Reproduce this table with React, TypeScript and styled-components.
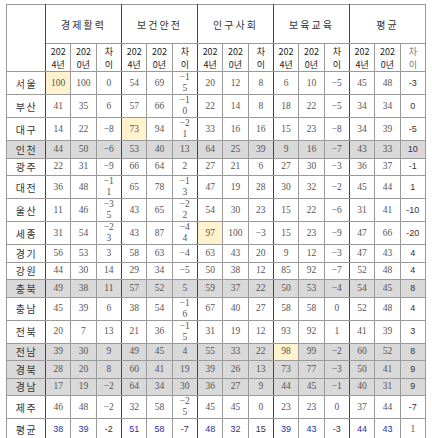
import React from "react";
import styled, { createGlobalStyle, css } from "styled-components";

const Global = createGlobalStyle`
  html, body { margin: 0; padding: 0; background: #fff; }
  body { font-family: "Noto Sans CJK KR", "Noto Sans", sans-serif; }
`;

type Bg = "gray" | "hl" | undefined;
type Kind = "num" | "sans" | "blue" | "avgdiff";

const Page = styled.div`
  padding: 4px 0 0 6px;
`;

const Table = styled.table`
  border-collapse: collapse;
  table-layout: fixed;
  width: 420px;
  border: 1px solid #555;
`;

const Row = styled.tr<{ $h: number; $gray?: boolean }>`
  height: ${(p) => p.$h}px;
  background: ${(p) => (p.$gray ? "#d9d9d9" : "#fff")};
`;

const HeadCell = styled.th<{ $divider?: boolean }>`
  border: 1px solid #9a9a9a;
  ${(p) => p.$divider && css`border-right: 1px solid #444;`}
  font-weight: normal;
  font-size: 10px;
  letter-spacing: 2px;
  color: #333;
  padding: 0;
  text-align: center;
  vertical-align: middle;
`;

const SubHeadCell = styled.th<{ $divider?: boolean; $faint?: boolean }>`
  border: 1px solid #9a9a9a;
  ${(p) => p.$divider && css`border-right: 1px solid #444;`}
  font-weight: normal;
  font-family: "Noto Sans CJK KR", "Noto Sans", sans-serif;
  font-size: 9px;
  line-height: 13px;
  color: ${(p) => (p.$faint ? "#777" : "#222")};
  padding: 0;
  text-align: center;
  vertical-align: middle;
`;

const SubLine = styled.span`
  display: block;
`;

const LabelCell = styled.td`
  border: 1px solid #9a9a9a;
  border-right: 1px solid #444;
  font-size: 10px;
  letter-spacing: 1.5px;
  color: #333;
  text-align: center;
  vertical-align: middle;
  padding: 0 0 0 1px;
`;

const Cell = styled.td<{ $bg?: Bg; $kind: Kind; $divider?: boolean }>`
  border: 1px solid #9a9a9a;
  ${(p) => p.$divider && css`border-right: 1px solid #444;`}
  ${(p) => p.$bg === "hl" && css`background: #fff2cc;`}
  text-align: center;
  vertical-align: middle;
  padding: 0;
  line-height: 11px;
  ${(p) =>
    p.$kind === "num" &&
    css`
      font-family: "Liberation Serif", serif;
      font-size: 9.5px;
      color: #555;
    `}
  ${(p) =>
    p.$kind === "sans" &&
    css`
      font-family: "Liberation Sans", sans-serif;
      font-size: 9px;
      color: #444;
    `}
  ${(p) =>
    p.$kind === "avgdiff" &&
    css`
      font-family: "Liberation Sans", sans-serif;
      font-size: 9px;
      color: #333;
    `}
  ${(p) =>
    p.$kind === "blue" &&
    css`
      font-family: "Liberation Sans", sans-serif;
      font-size: 9px;
      color: #2e2e9e;
    `}
`;

const groups = ["경제활력", "보건안전", "인구사회", "보육교육", "평균"];

type RowData = {
  name: string;
  v: (number | string)[];
  gray?: boolean;
  hl?: number;
};

const rows: RowData[] = [
  { name: "서울", v: [100, 100, 0, 54, 69, -15, 20, 12, 8, 6, 10, -5, 45, 48, -3], hl: 0 },
  { name: "부산", v: [41, 35, 6, 57, 66, -10, 22, 14, 8, 18, 22, -5, 34, 34, 0] },
  { name: "대구", v: [14, 22, -8, 73, 94, -21, 33, 16, 16, 15, 23, -8, 34, 39, -5], hl: 3 },
  { name: "인천", v: [44, 50, -6, 53, 40, 13, 64, 25, 39, 9, 16, -7, 43, 33, 10], gray: true },
  { name: "광주", v: [22, 31, -9, 66, 64, 2, 27, 21, 6, 27, 30, -3, 36, 37, -1] },
  { name: "대전", v: [36, 48, -11, 65, 78, -13, 47, 19, 28, 30, 32, -2, 45, 44, 1] },
  { name: "울산", v: [11, 46, -35, 43, 65, -22, 54, 30, 23, 15, 22, -6, 31, 41, -10] },
  { name: "세종", v: [31, 54, -23, 43, 87, -44, 97, 100, -3, 15, 23, -9, 47, 66, -20], hl: 6 },
  { name: "경기", v: [56, 53, 3, 58, 63, -4, 63, 43, 20, 9, 12, -3, 47, 43, 4] },
  { name: "강원", v: [44, 30, 14, 29, 34, -5, 50, 38, 12, 85, 92, -7, 52, 48, 4] },
  { name: "충북", v: [49, 38, 11, 57, 52, 5, 59, 37, 22, 50, 53, -4, 54, 45, 8], gray: true },
  { name: "충남", v: [45, 39, 6, 38, 54, -16, 67, 40, 27, 58, 58, 0, 52, 48, 4] },
  { name: "전북", v: [20, 7, 13, 21, 36, -15, 31, 19, 12, 93, 92, 1, 41, 39, 3] },
  { name: "전남", v: [39, 30, 9, 49, 45, 4, 55, 33, 22, 98, 99, -2, 60, 52, 8], gray: true, hl: 9 },
  { name: "경북", v: [28, 20, 8, 60, 41, 19, 39, 26, 13, 73, 77, -3, 50, 41, 9], gray: true },
  { name: "경남", v: [17, 19, -2, 64, 34, 30, 36, 27, 9, 44, 45, -1, 40, 31, 9], gray: true },
  { name: "제주", v: [46, 48, -2, 32, 58, -25, 45, 45, 0, 23, 23, 0, 37, 44, -7] },
];

const avg = [38, 39, -2, 51, 58, -7, 48, 32, 15, 39, 43, -3, 44, 43, 1];

const isDiff = (i: number) => i % 3 === 2;

function renderSerif(v: number | string) {
  const n = Number(v);
  if (n < 0) {
    const s = String(Math.abs(n));
    if (s.length >= 2) {
      return (
        <>
          {"\u2212" + s[0]}
          <br />
          {s.slice(1)}
        </>
      );
    }
    return "\u2212" + s;
  }
  return String(v);
}

const rowHeight = (r: RowData) =>
  r.v.some((x, i) => i < 12 && isDiff(i) && Number(x) <= -10) ? 22 : 17.5;

const subLabels = [
  ["202", "4년"],
  ["202", "0년"],
  ["차", "이"],
];

export default function App() {
  return (
    <Page>
      <Global />
      <Table>
        <colgroup>
          <col style={{ width: 39 }} />
          {Array.from({ length: 15 }).map((_, i) => (
            <col key={i} />
          ))}
        </colgroup>
        <thead>
          <Row $h={39}>
            <HeadCell rowSpan={2} $divider />
            {groups.map((g, i) => (
              <HeadCell key={g} colSpan={3} $divider={i < 4}>
                {g}
              </HeadCell>
            ))}
          </Row>
          <Row $h={28}>
            {groups.map((g, gi) => (
              <React.Fragment key={g}>
                {subLabels.map((lines, li) => (
                  <SubHeadCell
                    key={li}
                    $divider={li === 2 && gi < 4}
                    $faint={li === 2 && gi === 4}
                  >
                    <SubLine>{lines[0]}</SubLine>
                    <SubLine>{lines[1]}</SubLine>
                  </SubHeadCell>
                ))}
              </React.Fragment>
            ))}
          </Row>
        </thead>
        <tbody>
          {rows.map((r) => (
            <Row key={r.name} $h={rowHeight(r)} $gray={r.gray}>
              <LabelCell>{r.name}</LabelCell>
              {r.v.map((v, i) => (
                <Cell
                  key={i}
                  $kind={i === 14 ? "avgdiff" : "num"}
                  $bg={r.hl === i ? "hl" : undefined}
                  $divider={isDiff(i) && i < 14}
                >
                  {i === 14 ? String(v) : renderSerif(v)}
                </Cell>
              ))}
            </Row>
          ))}
          <Row $h={22}>
            <LabelCell>평균</LabelCell>
            {avg.map((v, i) => (
              <Cell
                key={i}
                $kind={i === 14 ? "num" : isDiff(i) ? "avgdiff" : "blue"}
                $divider={isDiff(i) && i < 14}
              >
                {String(v)}
              </Cell>
            ))}
          </Row>
        </tbody>
      </Table>
    </Page>
  );
}
